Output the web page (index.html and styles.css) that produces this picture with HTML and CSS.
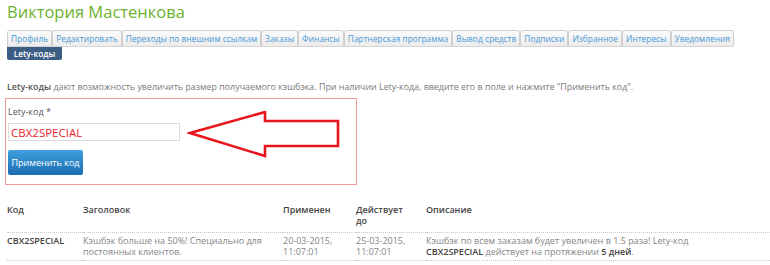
FILE: index.html
```html
<!DOCTYPE html>
<html lang="ru">
<head>
  <meta charset="UTF-8"/>
  <title>Lety-коды</title>
  <link rel="stylesheet" href="styles.css">
</head>
<body>
  <div class="page">
    <h1>Виктория Мастенкова</h1>

    <div class="tabs">
      <a class="tab">Профиль</a>
      <a class="tab">Редактировать</a>
      <a class="tab">Переходы по внешним ссылкам</a>
      <a class="tab">Заказы</a>
      <a class="tab">Финансы</a>
      <a class="tab">Партнерская программа</a>
      <a class="tab">Вывод средств</a>
      <a class="tab">Подписки</a>
      <a class="tab">Избранное</a>
      <a class="tab">Интересы</a>
      <a class="tab">Уведомления</a>
    </div>
    <div class="subtabs">
      <a class="subtab active">Lety-коды</a>
    </div>

    <p class="intro"><b>Lety-коды</b> дают возможность увеличить размер получаемого кэшбэка. При наличии Lety-кода, введите его в поле и нажмите "Применить код".</p>

    <form class="code-box">
      <label for="code">Lety-код *</label>
      <input type="text" id="code" value="CBX2SPECIAL"/>
      <button type="button">Применить код</button>
      <svg class="arrow" width="160" height="52" viewBox="0 0 160 52">
        <polygon points="3,22 78,1 78,10 151,10 151,35 78,35 78,45" fill="none" stroke="#e8151d" stroke-width="2.6" stroke-linejoin="miter"/>
      </svg>
    </form>

    <table class="codes">
      <colgroup>
        <col class="c-code"><col class="c-title"><col class="c-applied"><col class="c-valid"><col>
      </colgroup>
      <thead>
        <tr>
          <th>Код</th>
          <th>Заголовок</th>
          <th>Применен</th>
          <th>Действует до</th>
          <th>Описание</th>
        </tr>
      </thead>
      <tbody>
        <tr>
          <td class="code">CBX2SPECIAL</td>
          <td>Кэшбэк больше на 50%! Специально для постоянных клиентов.</td>
          <td>20-03-2015, 11:07:01</td>
          <td>25-03-2015, 11:07:01</td>
          <td>Кэшбэк по всем заказам будет увеличен в 1.5 раза! Lety-код <b>CBX2SPECIAL</b> действует на протяжении <b>5 дней</b>.</td>
        </tr>
      </tbody>
    </table>
  </div>
</body>
</html>
```

FILE: styles.css
```css
body {
  margin:0; padding:0;
  font-family:'Open Sans',sans-serif;
  background:#fff;
  color:#777;
  overflow:hidden;
}
.page { padding:0 0 0 7px; width:763px; }

h1 {
  margin:0; height:24px;
  font-size:16.5px; font-weight:400; line-height:24px;
  color:#6cb12f;
}

/* Tabs */
.tabs {
  display:flex; margin-top:6px;
  width:726px;
  border-bottom:1px solid #d4d4d4;
}
.tab {
  display:block; flex:none;
  padding:0 3px; height:15px; line-height:15px;
  font-size:8.4px; color:#4a98d6;
  background:linear-gradient(#fbfbfb,#ececec);
  border:1px solid #cfcfcf; border-bottom:none;
  border-radius:3px 3px 0 0;
  white-space:nowrap;
}
.subtabs { display:flex; }
.subtab {
  display:block;
  width:55px; height:13px; line-height:13px;
  text-align:center;
  font-size:8.4px; font-weight:600; color:#fff;
  background:#3c5d84;
  border-radius:0 0 2px 2px;
}

.intro {
  margin:21px 0 0; font-size:8.9px; line-height:12px; color:#7a7a7a;
}
.intro b { color:#555; font-weight:600; }

/* Code form */
.code-box {
  position:relative;
  margin:5px 0 0 -2px;
  width:348px; height:85px;
  border:1px solid #f09a9a;
  display:flex; flex-direction:column; align-items:flex-start;
  padding:0 0 0 2px; box-sizing:content-box;
}
.code-box label {
  margin-top:6px; font-size:9px; line-height:13px; color:#555;
}
.code-box input {
  margin-top:5px;
  width:172px; height:18px; box-sizing:border-box;
  padding:0 2px;
  border:1px solid #dcdcdc;
  font-family:'Open Sans',sans-serif;
  font-size:11.5px; color:#e8252c;
}
.code-box button {
  margin-top:9px;
  width:75px; height:25px;
  border:none; border-radius:2px;
  background:linear-gradient(#3da0de,#1e6db3);
  color:#fff; font-family:'Open Sans',sans-serif; font-size:9px;
  white-space:nowrap;
  padding:0;
}
.arrow { position:absolute; left:181px; top:12px; }

/* Table */
.codes {
  margin-top:14px;
  border-collapse:collapse; table-layout:fixed;
  width:763px; font-size:9px; line-height:11px;
}
.c-code { width:76px; }
.c-title { width:200px; }
.c-applied { width:73px; }
.c-valid { width:70px; }
.codes th {
  text-align:left; vertical-align:top;
  font-weight:600; color:#444;
  padding:5px 12px 6px 0;
  border-bottom:1px dotted #c8c8c8;
}
.codes td {
  vertical-align:top;
  padding:2px 12px 3px 0;
  border-bottom:1px dotted #c8c8c8;
  color:#858585;
}
.codes td:last-child { padding-right:70px; }
.codes td.code, .codes td b { color:#444; font-weight:600; }
```
